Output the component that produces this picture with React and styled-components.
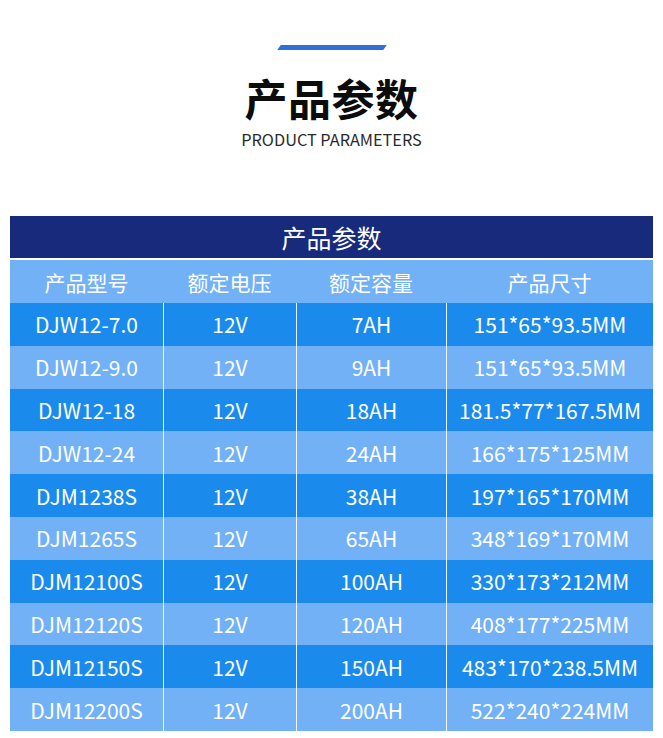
import { createGlobalStyle, styled } from "styled-components";

const GlobalStyle = createGlobalStyle`
  html, body {
    margin: 0;
    padding: 0;
    background: #fff;
  }
  body {
    font-family: "Noto Sans CJK SC", "Noto Sans", sans-serif;
  }
`;

const Page = styled.div`
  width: 663px;
  height: 738px;
  overflow: hidden;
  background: #fff;
`;

const Heading = styled.div`
  display: flex;
  flex-direction: column;
  align-items: center;
  padding-top: 45px;
`;

const Accent = styled.div`
  width: 106px;
  height: 5px;
  background: #2f70d8;
  transform: skewX(-35deg);
`;

const Title = styled.h1`
  margin: 25px 0 0;
  font-size: 43px;
  line-height: 44px;
  font-weight: 700;
  color: #0c0c0c;
  letter-spacing: 0.5px;
`;

const Subtitle = styled.div`
  margin-top: 10px;
  font-size: 16.3px;
  line-height: 20px;
  color: #2a2a2a;
`;

const Table = styled.div`
  margin: 67px 0 0 10px;
  width: 643px;
`;

const TableTitle = styled.div`
  height: 42px;
  background: #172a7c;
  color: #fff;
  font-size: 25px;
  display: flex;
  align-items: center;
  justify-content: center;
  margin-bottom: 2px;
`;

const Grid = styled.div`
  display: grid;
  grid-template-columns: 153px 133px 150px 207px;
`;

const Cell = styled.div`
  height: ${(p) => (p.$head ? "43px" : "42.8px")};
  display: flex;
  align-items: center;
  justify-content: center;
  color: #fff;
  font-size: 21px;
  background: ${(p) => (p.$dark ? "#1a8bec" : "#73b1f7")};
  border-left: ${(p) => (p.$divider ? "1px solid rgba(255,255,255,0.9)" : "none")};
  box-sizing: border-box;
  white-space: nowrap;
`;

const headers = ["产品型号", "额定电压", "额定容量", "产品尺寸"];

const rows = [
  ["DJW12-7.0", "12V", "7AH", "151*65*93.5MM"],
  ["DJW12-9.0", "12V", "9AH", "151*65*93.5MM"],
  ["DJW12-18", "12V", "18AH", "181.5*77*167.5MM"],
  ["DJW12-24", "12V", "24AH", "166*175*125MM"],
  ["DJM1238S", "12V", "38AH", "197*165*170MM"],
  ["DJM1265S", "12V", "65AH", "348*169*170MM"],
  ["DJM12100S", "12V", "100AH", "330*173*212MM"],
  ["DJM12120S", "12V", "120AH", "408*177*225MM"],
  ["DJM12150S", "12V", "150AH", "483*170*238.5MM"],
  ["DJM12200S", "12V", "200AH", "522*240*224MM"],
];

export default function App() {
  return (
    <Page>
      <GlobalStyle />
      <Heading>
        <Accent />
        <Title>产品参数</Title>
        <Subtitle>PRODUCT PARAMETERS</Subtitle>
      </Heading>
      <Table>
        <TableTitle>产品参数</TableTitle>
        <Grid>
          {headers.map((h) => (
            <Cell key={h} $head>
              {h}
            </Cell>
          ))}
          {rows.map((row, i) =>
            row.map((v, j) => (
              <Cell key={i + "-" + j} $dark={i % 2 === 0} $divider={j > 0}>
                {v}
              </Cell>
            ))
          )}
        </Grid>
      </Table>
    </Page>
  );
}
